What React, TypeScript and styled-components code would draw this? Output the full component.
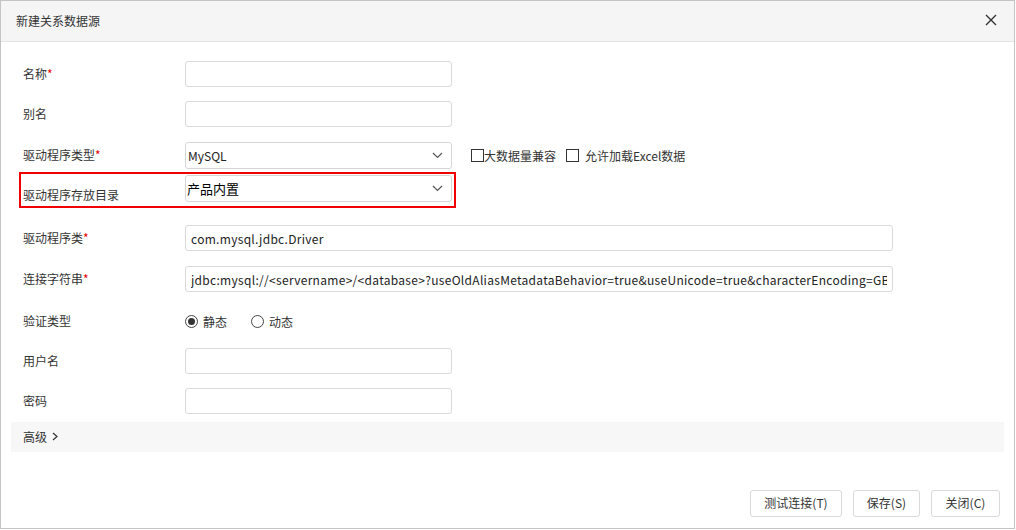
import React, { useState } from 'react';
import styled, { createGlobalStyle } from 'styled-components';

const GlobalStyle = createGlobalStyle`
  html, body {
    margin: 0;
    padding: 0;
    background: #ffffff;
  }
  body {
    font-family: "Noto Sans CJK SC", "Noto Sans", sans-serif;
    font-size: 12px;
    color: #333;
  }
`;

const Dialog = styled.div`
  width: 1015px;
  height: 529px;
  box-sizing: border-box;
  border: 1px solid #c4c4c4;
  background: #fff;
  display: flex;
  flex-direction: column;
`;

const Header = styled.div`
  flex: none;
  background: #f5f5f5;
  border-bottom: 1px solid #e4e4e4;
  display: flex;
  align-items: center;
  justify-content: space-between;
  padding: 0 14px 2px 15px;
  box-sizing: content-box;
  height: 38px;
`;

const Title = styled.div`
  font-size: 12px;
  color: #333;
`;

const CloseButton = styled.button`
  width: 18px;
  height: 18px;
  padding: 0;
  border: none;
  background: transparent;
  display: flex;
  align-items: center;
  justify-content: center;
  cursor: pointer;
`;

const Body = styled.div`
  flex: 1;
  padding: 19px 0 0;
  display: flex;
  flex-direction: column;
`;

const Row = styled.div<{ $top?: number }>`
  display: flex;
  align-items: center;
  height: 26px;
  margin-top: ${({ $top }) => $top ?? 0}px;
  padding-left: 22px;
`;

const HighlightRow = styled.div<{ $top?: number }>`
  display: flex;
  align-items: flex-start;
  height: 31px;
  margin-top: ${({ $top }) => $top ?? 0}px;
  margin-left: 18px;
  width: 431px;
  border: 2px solid #f00000;
  padding: 1px 0 0 2px;
`;

const Label = styled.div<{ $bottom?: boolean }>`
  width: 162px;
  flex: none;
  font-size: 12px;
  line-height: 16px;
  color: #333;
  align-self: ${({ $bottom }) => ($bottom ? 'flex-end' : 'center')};
  margin-top: ${({ $bottom }) => ($bottom ? '0' : '-1px')};
  padding-bottom: ${({ $bottom }) => ($bottom ? '3px' : '0')};
`;

const Star = styled.span`
  color: #e60000;
`;

const TextInput = styled.input<{ $wide?: boolean }>`
  width: ${({ $wide }) => ($wide ? '708px' : '267px')};
  height: 26px;
  box-sizing: border-box;
  border: 1px solid #dadada;
  border-radius: 3px;
  padding: 0 5px;
  font-family: "Noto Sans CJK SC", "Noto Sans", sans-serif;
  font-size: 12px;
  letter-spacing: ${({ $wide }) => ($wide ? '0.3px' : '0')};
  color: #222;
  outline: none;
  background: #fff;
`;

const SelectBox = styled.div<{ $strong?: boolean }>`
  width: 267px;
  height: 27px;
  box-sizing: border-box;
  border: 1px solid #d6d6d6;
  border-radius: 3px;
  padding: 0 8px 0 ${({ $strong }) => ($strong ? '1px' : '2px')};
  display: flex;
  align-items: center;
  justify-content: space-between;
  font-size: ${({ $strong }) => ($strong ? '13px' : '12px')};
  color: ${({ $strong }) => ($strong ? '#000' : '#222')};
  background: #fff;
`;

const CheckGroup = styled.div`
  display: flex;
  align-items: center;
  margin-left: 19px;
`;

const CheckItem = styled.label<{ $gap?: number }>`
  display: flex;
  align-items: center;
  gap: ${({ $gap }) => $gap ?? 0}px;
  margin-right: 10px;
  font-size: 12px;
  color: #333;
`;

const CheckSquare = styled.span`
  width: 13px;
  height: 13px;
  box-sizing: border-box;
  border: 1px solid #333;
  background: #fff;
  display: inline-block;
`;

const RadioItem = styled.label`
  display: flex;
  align-items: center;
  gap: 5px;
  margin-right: 24px;
  font-size: 12px;
  color: #333;
`;

const RadioCircle = styled.span<{ $on?: boolean }>`
  width: 13px;
  height: 13px;
  box-sizing: border-box;
  border-radius: 50%;
  border: 1px solid #444;
  display: flex;
  align-items: center;
  justify-content: center;
  &::after {
    content: '';
    width: 7px;
    height: 7px;
    border-radius: 50%;
    background: ${({ $on }) => ($on ? '#333' : 'transparent')};
  }
`;

const Advanced = styled.div`
  margin: 8px 10px 0;
  height: 30px;
  background: #f7f7f7;
  display: flex;
  align-items: center;
  padding: 0 0 2px 12px;
  box-sizing: border-box;
  gap: 4px;
  font-size: 12px;
  color: #333;
`;

const Footer = styled.div`
  flex: none;
  display: flex;
  justify-content: flex-end;
  gap: 11px;
  padding: 0 14px 11px 0;
`;

const FooterButton = styled.button<{ $w: number }>`
  width: ${({ $w }) => $w}px;
  height: 27px;
  box-sizing: border-box;
  border: 1px solid #dadada;
  border-radius: 3px;
  background: #fff;
  font-family: "Noto Sans CJK SC", "Noto Sans", sans-serif;
  font-size: 12px;
  color: #333;
  padding: 0 0 2px;
  cursor: pointer;
`;

const Chevron = () => (
  <svg width="11" height="7" viewBox="0 0 11 7">
    <path d="M1 1 L5.5 5.5 L10 1" fill="none" stroke="#555" strokeWidth="1.2" />
  </svg>
);

const App: React.FC = () => {
  const [auth, setAuth] = useState<'static' | 'dynamic'>('static');

  return (
    <>
      <GlobalStyle />
      <Dialog>
        <Header>
          <Title>新建关系数据源</Title>
          <CloseButton aria-label="close">
            <svg width="12" height="12" viewBox="0 0 12 12">
              <path d="M1 1 L11 11 M11 1 L1 11" stroke="#333" strokeWidth="1.4" />
            </svg>
          </CloseButton>
        </Header>

        <Body>
          <Row>
            <Label>名称<Star>*</Star></Label>
            <TextInput />
          </Row>
          <Row $top={14}>
            <Label>别名</Label>
            <TextInput />
          </Row>
          <Row $top={15}>
            <Label>驱动程序类型<Star>*</Star></Label>
            <SelectBox>
              <span>MySQL</span>
              <Chevron />
            </SelectBox>
            <CheckGroup>
              <CheckItem>
                <CheckSquare />
                大数据量兼容
              </CheckItem>
              <CheckItem $gap={6}>
                <CheckSquare />
                允许加载Excel数据
              </CheckItem>
            </CheckGroup>
          </Row>
          <HighlightRow $top={4}>
            <Label $bottom>驱动程序存放目录</Label>
            <SelectBox $strong>
              <span>产品内置</span>
              <Chevron />
            </SelectBox>
          </HighlightRow>
          <Row $top={17}>
            <Label>驱动程序类<Star>*</Star></Label>
            <TextInput $wide defaultValue="com.mysql.jdbc.Driver" />
          </Row>
          <Row $top={15}>
            <Label>连接字符串<Star>*</Star></Label>
            <TextInput
              $wide
              defaultValue="jdbc:mysql://<servername>/<database>?useOldAliasMetadataBehavior=true&useUnicode=true&characterEncoding=GBK"
            />
          </Row>
          <Row $top={16}>
            <Label>验证类型</Label>
            <RadioItem onClick={() => setAuth('static')}>
              <RadioCircle $on={auth === 'static'} />
              静态
            </RadioItem>
            <RadioItem onClick={() => setAuth('dynamic')}>
              <RadioCircle $on={auth === 'dynamic'} />
              动态
            </RadioItem>
          </Row>
          <Row $top={14}>
            <Label>用户名</Label>
            <TextInput />
          </Row>
          <Row $top={14}>
            <Label>密码</Label>
            <TextInput type="password" />
          </Row>
          <Advanced>
            高级
            <svg width="8" height="9" viewBox="0 0 8 9">
              <path d="M2 1 L6 4.5 L2 8" fill="none" stroke="#333" strokeWidth="1.2" />
            </svg>
          </Advanced>
        </Body>

        <Footer>
          <FooterButton $w={92}>测试连接(T)</FooterButton>
          <FooterButton $w={67}>保存(S)</FooterButton>
          <FooterButton $w={69}>关闭(C)</FooterButton>
        </Footer>
      </Dialog>
    </>
  );
};

export default App;
